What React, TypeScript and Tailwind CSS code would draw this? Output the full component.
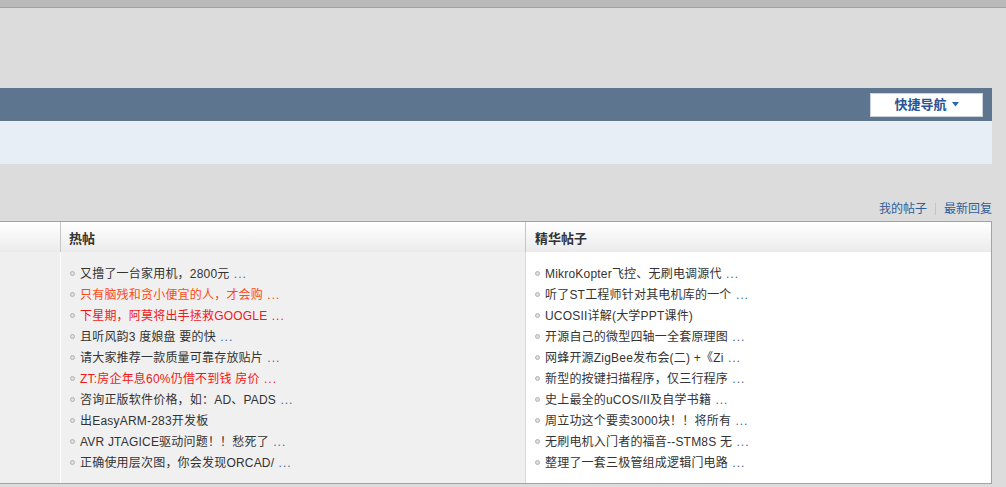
import React from "react";

type Item = { t: string; c?: string; dots?: boolean };

const hot: Item[] = [
  { t: "又撸了一台家用机，2800元", dots: true },
  { t: "只有脑残和贪小便宜的人，才会购", c: "text-[#ff4a12]", dots: true },
  { t: "下星期，阿莫将出手拯救GOOGLE", c: "text-[#f01818]", dots: true },
  { t: "且听风韵3 度娘盘 要的快", dots: true },
  { t: "请大家推荐一款质量可靠存放贴片", dots: true },
  { t: "ZT:房企年息60%仍借不到钱 房价", c: "text-[#f01818]", dots: true },
  { t: "咨询正版软件价格，如：AD、PADS", dots: true },
  { t: "出EasyARM-283开发板" },
  { t: "AVR JTAGICE驱动问题！！愁死了", dots: true },
  { t: "正确使用层次图，你会发现ORCAD/", dots: true },
];

const digest: Item[] = [
  { t: "MikroKopter飞控、无刷电调源代", dots: true },
  { t: "听了ST工程师针对其电机库的一个", dots: true },
  { t: "UCOSII详解(大学PPT课件)" },
  { t: "开源自己的微型四轴一全套原理图", dots: true },
  { t: "网蜂开源ZigBee发布会(二) +《Zi", dots: true },
  { t: "新型的按键扫描程序，仅三行程序", dots: true },
  { t: "史上最全的uCOS/II及自学书籍", dots: true },
  { t: "周立功这个要卖3000块！！将所有", dots: true },
  { t: "无刷电机入门者的福音--STM8S 无", dots: true },
  { t: "整理了一套三极管组成逻辑门电路", dots: true },
];

function Bullet() {
  return (
    <span className="inline-block w-[5px] h-[5px] rounded-full border border-[#b4b4b4] bg-[#dedede] mr-[5px] shrink-0" />
  );
}

function List({ items }: { items: Item[] }) {
  return (
    <ul className="pt-[11px]">
      {items.map((it, i) => (
        <li key={i} className="h-[21px] flex items-center whitespace-nowrap">
          <Bullet />
          <span className={`${it.c ?? "text-[#333333]"} tracking-[0.2px]`}>
            {it.t}
            {it.dots && (
              <span className={`${it.c ?? "text-[#3f64a0]"} tracking-[1px]`}> ...</span>
            )}
          </span>
        </li>
      ))}
    </ul>
  );
}

export default function App() {
  return (
    <div
      className="w-[1006px] h-[487px] bg-[#dcdcdc] overflow-hidden text-[12px] leading-[14px]"
      style={{ fontFamily: '"Liberation Sans", "Noto Sans CJK SC", sans-serif' }}
    >
      <div className="h-[8px] bg-[#b9b9b9] border-b border-[#a2a2a2]" />
      <div className="h-[80px]" />
      <div className="w-[992px] h-[33px] bg-[#5e7590] flex items-center justify-end pr-[9px]">
        <button className="w-[113px] h-[24px] bg-white border border-[#c9d3df] flex items-center justify-center gap-[5px] text-[#2b5492] font-bold text-[13px]">
          <span>快捷导航</span>
          <svg width="7" height="5" viewBox="0 0 7 5">
            <path d="M0 0 L7 0 L3.5 4.5 Z" fill="#2a68b4" />
          </svg>
        </button>
      </div>
      <div className="w-[992px] h-[43px] bg-[#e8eef5] border-t border-[#eef2f8]" />
      <div className="h-[36px]" />
      <div className="w-[992px] h-[18px] flex items-center justify-end text-[#2f5e97]">
        <span>我的帖子</span>
        <span className="w-px h-[12px] bg-[#c4c4c4] mx-[8px]" />
        <span>最新回复</span>
      </div>
      <div className="h-[3px]" />
      <div className="w-[992px] h-[263px] border border-l-0 border-[#a2a2a2] flex">
        <div className="w-[60px] flex flex-col">
          <div className="h-[30px] bg-gradient-to-b from-white to-[#ebebeb]" />
          <div className="flex-1 bg-[#efefef]" />
        </div>
        <div className="w-[465px] flex flex-col">
          <div className="h-[30px] bg-gradient-to-b from-white to-[#ebebeb] border-l border-[#c6c6c6] pl-[8px] pt-[3px] flex items-center font-bold text-[#333] text-[13px]">
            热帖
          </div>
          <div className="flex-1 bg-[#f0f0f0] border-l border-white pl-[9px]">
            <List items={hot} />
          </div>
        </div>
        <div className="flex-1 flex flex-col">
          <div className="h-[30px] bg-gradient-to-b from-white to-[#ebebeb] border-l border-[#c6c6c6] pl-[9px] pt-[3px] flex items-center font-bold text-[#333] text-[13px]">
            精华帖子
          </div>
          <div className="flex-1 bg-white border-l border-[#d8d8d8] pl-[9px]">
            <List items={digest} />
          </div>
        </div>
      </div>
    </div>
  );
}
